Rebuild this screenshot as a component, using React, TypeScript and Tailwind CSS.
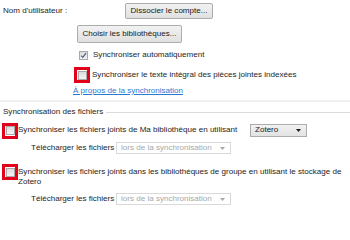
import React from "react";

function Check({ checked = false, flagged = false }: { checked?: boolean; flagged?: boolean }) {
  const box = (
    <div className="w-[9px] h-[9px] border border-[#a9a9a9] bg-gradient-to-b from-[#dcdcdc] to-[#f4f4f4] flex items-center justify-center">
      {checked && (
        <svg width="7" height="7" viewBox="0 0 7 7">
          <path d="M1 3.6 L2.8 5.4 L6 1.2" fill="none" stroke="#4a5d8c" strokeWidth="1.2" />
        </svg>
      )}
    </div>
  );
  if (!flagged) return box;
  return (
    <div className="w-[16px] h-[16px] shrink-0 border-[3px] border-[#e3001b] flex items-center justify-center">
      {box}
    </div>
  );
}

function Button({ children, className = "" }: { children: React.ReactNode; className?: string }) {
  return (
    <div
      className={`flex items-center justify-center whitespace-nowrap border border-[#acacac] rounded-[2px] bg-gradient-to-b from-[#f2f2f2] to-[#e0e0e0] text-[#1a1a1a] ${className}`}
    >
      {children}
    </div>
  );
}

function Select({ label, disabled = false, className = "" }: { label: string; disabled?: boolean; className?: string }) {
  return (
    <div
      className={`flex items-center justify-between whitespace-nowrap pl-[4px] pr-[5px] border ${
        disabled
          ? "border-[#d9d9d9] bg-white text-[#a8a8a8]"
          : "border-[#acacac] bg-gradient-to-b from-[#f2f2f2] to-[#e2e2e2] text-[#1a1a1a]"
      } ${className}`}
    >
      <span>{label}</span>
      <svg width="5" height="3" viewBox="0 0 5 3">
        <path d="M0 0 H5 L2.5 3 Z" fill={disabled ? "#a8a8a8" : "#1a1a1a"} />
      </svg>
    </div>
  );
}

export default function App() {
  return (
    <div
      className="w-[350px] h-[211px] bg-white overflow-hidden whitespace-nowrap text-[8.05px] leading-none text-[#1e1e1e]"
      style={{ fontFamily: '"Liberation Sans", Arial, sans-serif' }}
    >
      {/* Compte */}
      <div className="flex items-center h-[16px] mt-[3px]">
        <span className="ml-[3px] w-[122px]">Nom d'utilisateur :</span>
        <Button className="w-[88px] h-[16px]">Dissocier le compte...</Button>
      </div>
      <div className="flex items-center h-[18px] mt-[6px] pl-[77px]">
        <Button className="w-[105px] h-[18px]">Choisir les bibliothèques...</Button>
      </div>
      <div className="flex items-center h-[9px] mt-[8px] pl-[79px] gap-[5px]">
        <Check checked />
        <span>Synchroniser automatiquement</span>
      </div>
      <div className="flex items-center h-[16px] mt-[7px] pl-[74px] gap-[2px]">
        <Check flagged />
        <span>Synchroniser le texte intégral des pièces jointes indexées</span>
      </div>
      <div className="h-[9px] mt-[4px] pl-[73px]">
        <span className="text-[#2a7ad5] underline">À propos de la synchronisation</span>
      </div>

      <div className="h-[2px] mt-[4px] bg-[#f0f0f0]" />

      {/* Synchronisation des fichiers */}
      <div className="flex items-center h-[9px] mt-[6px] pl-[3px]">
        <span className="pr-[3px]">Synchronisation des fichiers</span>
        <div className="flex-1 h-px bg-[#dcdcdc]" />
      </div>
      <div className="flex items-center h-[15px] mt-[6px] pl-[2px]">
        <Check flagged />
        <span className="w-[232px]">Synchroniser les fichiers joints de Ma bibliothèque en utilisant</span>
        <Select label="Zotero" className="w-[57px] h-[13px]" />
      </div>
      <div className="flex items-center h-[12px] mt-[4px] pl-[31px]">
        <span className="w-[85px]">Télécharger les fichiers</span>
        <Select label="lors de la synchronisation" disabled className="w-[115px] h-[12px]" />
      </div>
      <div className="flex items-start mt-[10px] pl-[2px]">
        <Check flagged />
        <span className="leading-[10px] mt-[3px]">
          Synchroniser les fichiers joints dans les bibliothèques de groupe en utilisant le stockage de
          <br />
          Zotero
        </span>
      </div>
      <div className="flex items-center h-[12px] mt-[6px] pl-[31px]">
        <span className="w-[85px]">Télécharger les fichiers</span>
        <Select label="lors de la synchronisation" disabled className="w-[115px] h-[12px]" />
      </div>
    </div>
  );
}
